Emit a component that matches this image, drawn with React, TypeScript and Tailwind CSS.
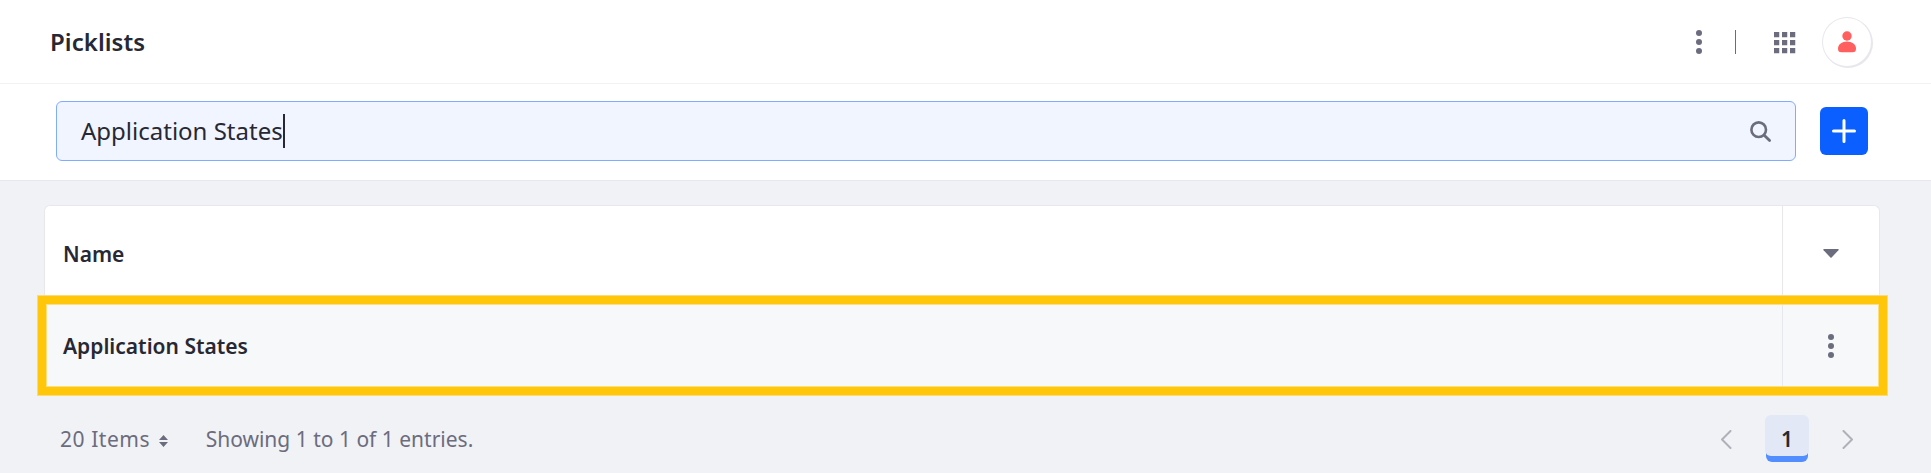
import React from "react";

function Kebab() {
  return (
    <svg width="24" height="24" viewBox="0 0 24 24" fill="#6b6c7e" className="shrink-0">
      <circle cx="12" cy="3" r="3" />
      <circle cx="12" cy="12" r="3" />
      <circle cx="12" cy="21" r="3" />
    </svg>
  );
}

function AppsGrid() {
  const cells = [0, 8, 16];
  return (
    <svg width="22" height="22" viewBox="0 0 22 22" fill="#6b6c7e" className="shrink-0">
      {cells.map((y) => cells.map((x) => <rect key={`${x}-${y}`} x={x} y={y} width="5.250" height="5.250" />))}
    </svg>
  );
}

function Header() {
  return (
    <header className="flex h-21 items-center border-b border-[#f1f2f5] bg-white pt-px pr-[60px] pl-[50px]">
      <h1 className="grow text-[24px] leading-9 font-semibold tracking-[0.05px]">Picklists</h1>
      <Kebab />
      <div className="ml-6 h-6 w-px shrink-0 bg-[#6b6c7e]" />
      <div className="mt-0.5 ml-[38px]">
        <AppsGrid />
      </div>
      <div className="ml-[27px] flex size-12 items-center justify-center rounded-full bg-white shadow-[0_0_0_1px_#e7e7ed,1px_1px_0_1px_#e7e7ed]">
        <svg width="18" height="22" viewBox="0 0 18 22" fill="#ff5f5f">
          <circle cx="9" cy="5" r="4.7" />
          <path d="M9 10.600C14 10.600 18 13.600 18 17.500C18 20.200 16.900 21.300 14.500 21.300H3.500C1.100 21.300 0 20.200 0 17.500C0 13.600 4 10.600 9 10.600Z" />
        </svg>
      </div>
    </header>
  );
}

function SearchBar() {
  return (
    <div className="flex h-[97px] items-center border-b border-[#e7e7ed] bg-white pr-[63px] pb-0.5 pl-14">
      <div className="flex h-15 w-[1740px] items-center rounded-md border border-[#80acff] bg-[#f0f5ff] pr-[23px] pl-6">
        <span className="text-[24px] leading-9">Application States</span>
        <span className="h-[34px] w-0.5 bg-[#272833]" />
        <svg width="22" height="22" viewBox="0 0 22 22" fill="none" stroke="#6b6c7e" strokeWidth="2.600" strokeLinecap="round" className="mt-0.5 ml-auto">
          <circle cx="8.700" cy="8.700" r="7.300" />
          <path d="M14.200 14.200L19.600 19.600" strokeWidth="2.800" />
        </svg>
      </div>
      <button className="ml-6 flex size-12 items-center justify-center rounded-md bg-[#0b5fff]">
        <svg width="24" height="24" viewBox="0 0 24 24" stroke="#fff" strokeWidth="3" strokeLinecap="round">
          <path d="M12 1.500V22.500M1.500 12H22.500" />
        </svg>
      </button>
    </div>
  );
}

function PicklistTable() {
  return (
    <div className="relative mx-11 mt-6 w-[1836px] text-[21px] font-semibold">
      <div className="flex h-[95px] rounded-t-md border border-b-0 border-[#e7e7ed] bg-white">
        <div className="flex grow items-center pt-[3px] pl-[18px]">Name</div>
        <div className="flex w-[97px] items-center justify-center border-l border-[#e7e7ed] pt-px">
          <svg width="16" height="9" viewBox="0 0 16 9" fill="#6b6c7e">
            <path d="M1 0H15Q16.300 .3 15.400 1.300L8.600 8.500Q8 9 7.400 8.500L.6 1.300Q-.3 .3 1 0Z" />
          </svg>
        </div>
      </div>
      <div className="flex h-[92px] border-x border-[#e7e7ed] bg-[#f7f8f9]">
        <div className="flex grow items-center pt-px pl-[18px]">Application States</div>
        <div className="flex w-[97px] items-center justify-center border-l border-[#e7e7ed]">
          <Kebab />
        </div>
      </div>
      <div className="absolute top-[91px] left-[-6px] h-[99px] w-[1849px] border-8 border-[#ffc60a] shadow-[0_0_0_1px_#fbdb78,inset_0_0_0_1px_#fbdf80]" />
    </div>
  );
}

function Chevron({ d }: { d: string }) {
  return (
    <svg width="11" height="19" viewBox="0 0 11 19" fill="none" stroke="#b0b0bb" strokeWidth="2" strokeLinecap="round" strokeLinejoin="round">
      <path d={d} />
    </svg>
  );
}

function Pagination() {
  return (
    <footer className="mt-[23px] flex h-12 items-center pr-[78px] pl-15 text-[21px] text-[#6b6c7e]">
      <span className="pt-0.5 tracking-[0.55px]">20 Items</span>
      <svg width="9" height="12" viewBox="0 0 9 12" fill="#6b6c7e" className="mt-[3px] ml-[9px]">
        <path d="M4.500 0L9 5H0ZM4.500 12L0 7H9Z" />
      </svg>
      <span className="ml-[37.500px] pt-0.5">Showing 1 to 1 of 1 entries.</span>
      <div className="ml-auto flex items-center">
        <Chevron d="M9.500 1L1 9.500L9.500 18" />
        <div className="mx-[33px] flex h-12 w-11 flex-col">
          <div className="relative z-10 flex h-[41px] items-center justify-center rounded-md bg-[#e2e8f6] pt-[9px] font-semibold text-[#272833]">1</div>
          <div className="mx-px -mt-1 h-[10px] rounded-b-md bg-[#528eff]" />
        </div>
        <Chevron d="M1.500 1L10 9.500L1.500 18" />
      </div>
    </footer>
  );
}

export default function App() {
  return (
    <div className="h-[473px] overflow-hidden bg-[#f1f2f5] font-['Noto_Sans',sans-serif] text-[#272833]">
      <Header />
      <SearchBar />
      <PicklistTable />
      <Pagination />
    </div>
  );
}
